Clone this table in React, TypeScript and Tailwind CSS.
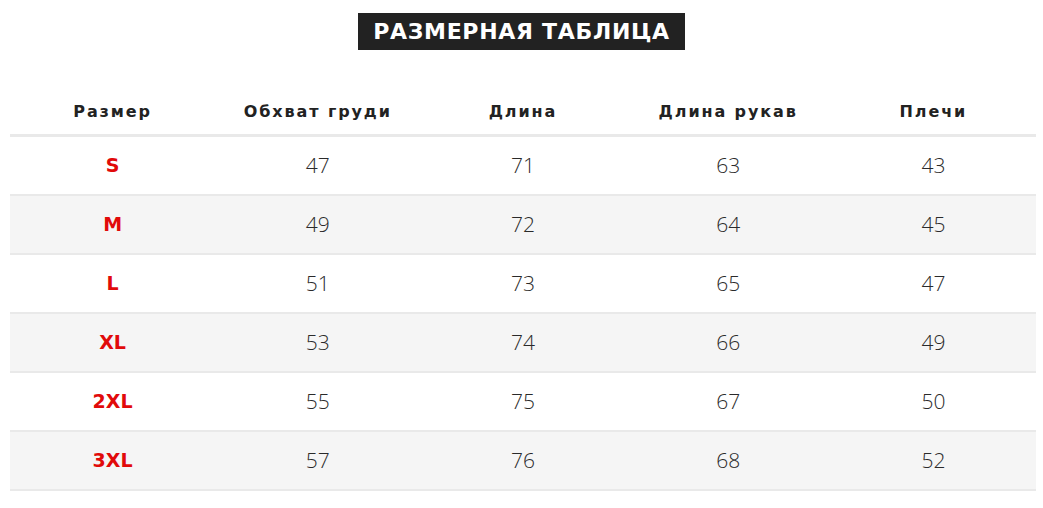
const rows = [
  { size: 'S', chest: 47, length: 71, sleeve: 63, shoulders: 43 },
  { size: 'M', chest: 49, length: 72, sleeve: 64, shoulders: 45 },
  { size: 'L', chest: 51, length: 73, sleeve: 65, shoulders: 47 },
  { size: 'XL', chest: 53, length: 74, sleeve: 66, shoulders: 49 },
  { size: '2XL', chest: 55, length: 75, sleeve: 67, shoulders: 50 },
  { size: '3XL', chest: 57, length: 76, sleeve: 68, shoulders: 52 },
];

const headers = ['Размер', 'Обхват груди', 'Длина', 'Длина рукав', 'Плечи'];

const wide = { fontFamily: '"DejaVu Sans", "Open Sans", sans-serif' };

export default function App() {
  return (
    <div
      className="w-[1043px] h-[508px] bg-white pt-[13px]"
      style={{ fontFamily: '"Open Sans", "DejaVu Sans", sans-serif' }}
    >
      {/* заголовок */}
      <div className="flex justify-center">
        <h1
          className="bg-[#222222] text-white font-bold text-[22px] leading-[37px] h-[37px] px-[15px] tracking-[0.7px]"
          style={wide}
        >
          РАЗМЕРНАЯ ТАБЛИЦА
        </h1>
      </div>

      {/* таблица */}
      <div className="mx-[10px] w-[1026px] mt-[36px]">
        <div className="grid grid-cols-5 h-[51px] pt-[4px] border-b-[3px] border-[#e9e9e9] items-center">
          {headers.map((h) => (
            <div
              key={h}
              className="text-center text-[16px] font-bold tracking-[1.9px] text-[#222]"
              style={wide}
            >
              {h}
            </div>
          ))}
        </div>
        {rows.map((r, i) => (
          <div
            key={r.size}
            className={`grid grid-cols-5 h-[59px] border-b-2 border-[#e9e9e9] items-center ${i % 2 === 1 ? 'bg-[#f5f5f5]' : 'bg-white'}`}
          >
            <div className="text-center text-[19px] font-bold text-[#e10a0a]" style={wide}>
              {r.size}
            </div>
            <div className="text-center text-[21px] font-light text-[#2a2a2a]">{r.chest}</div>
            <div className="text-center text-[21px] font-light text-[#2a2a2a]">{r.length}</div>
            <div className="text-center text-[21px] font-light text-[#2a2a2a]">{r.sleeve}</div>
            <div className="text-center text-[21px] font-light text-[#2a2a2a]">{r.shoulders}</div>
          </div>
        ))}
      </div>
    </div>
  );
}
